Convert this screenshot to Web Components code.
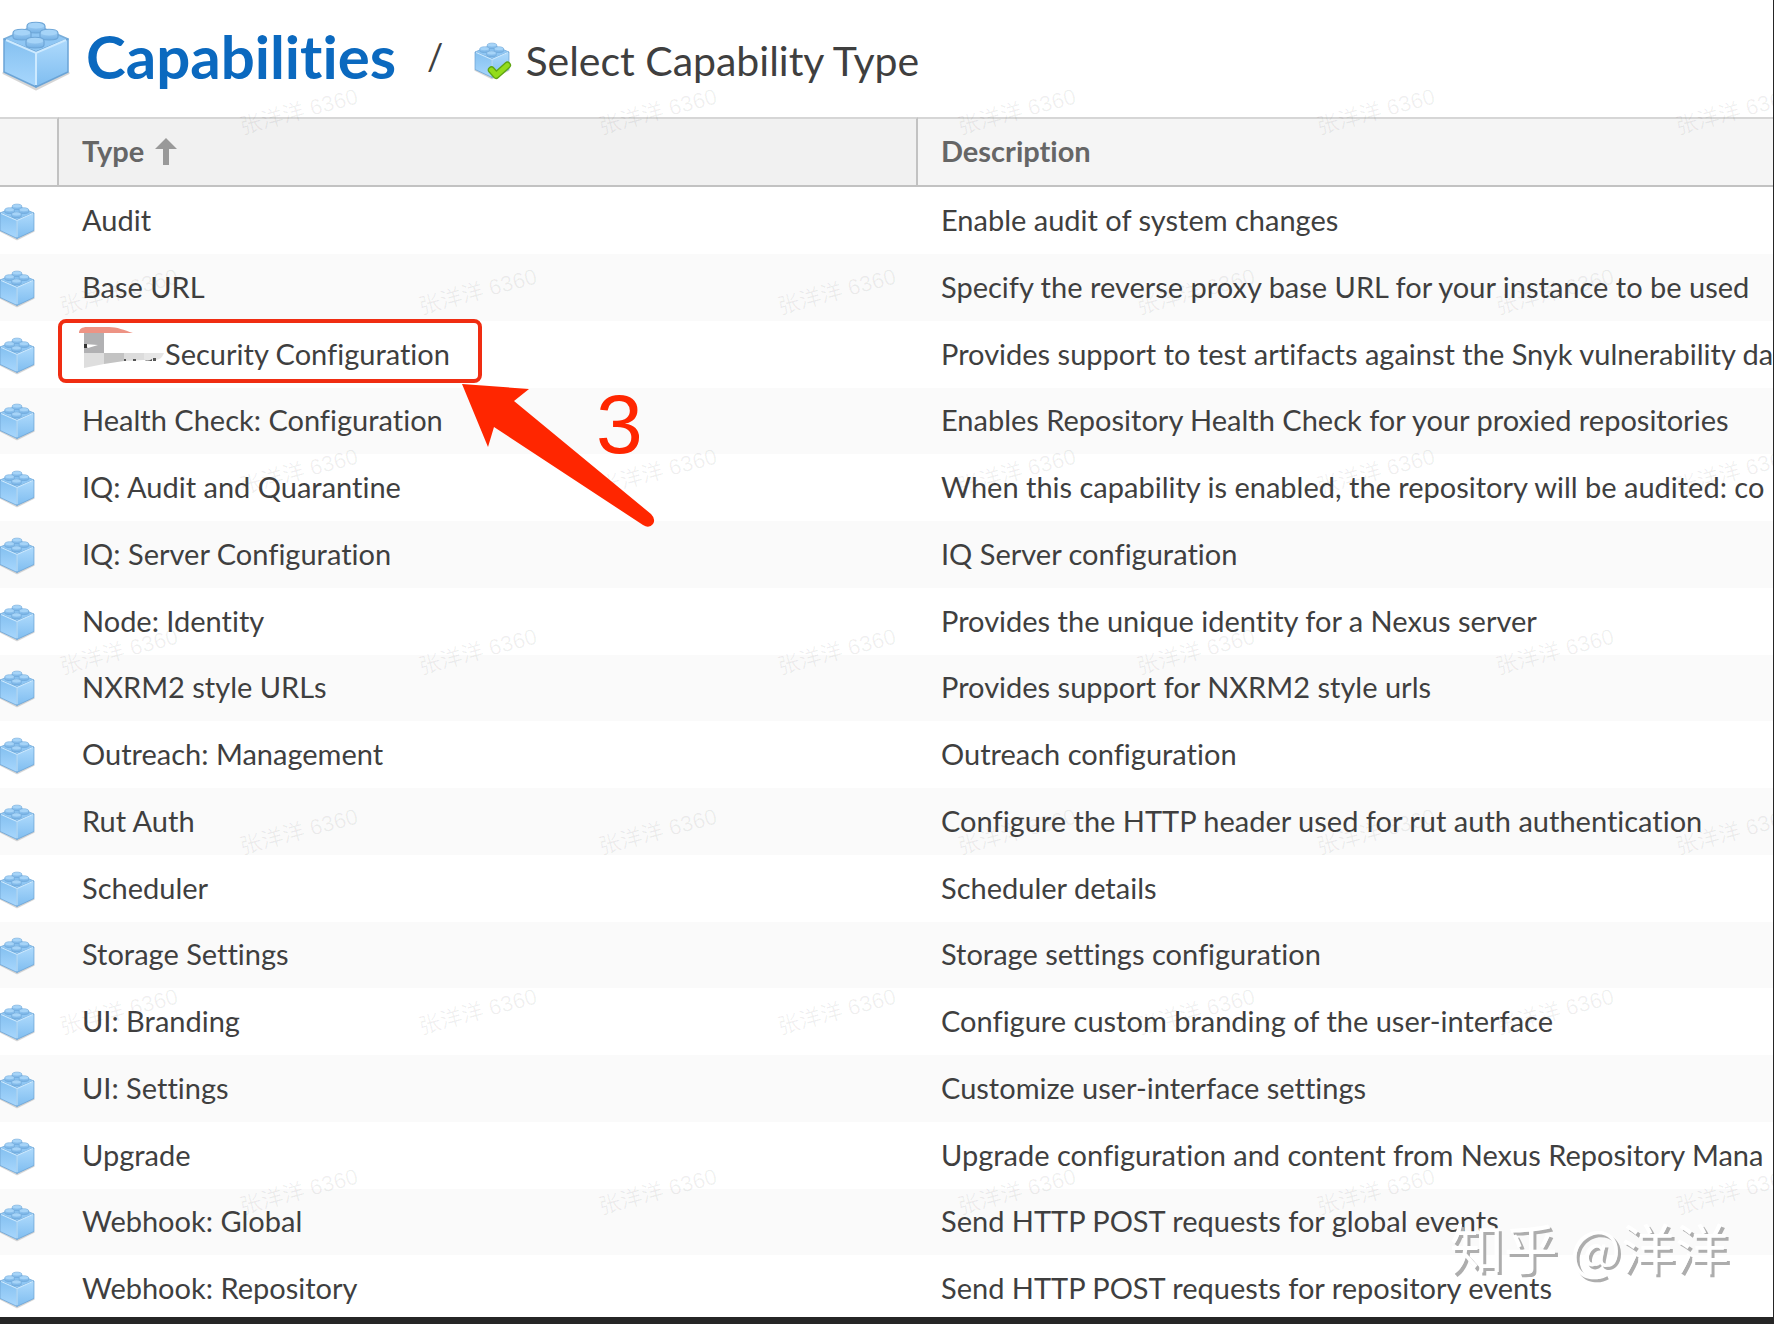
<!DOCTYPE html>
<html lang="en">
<head>
<meta charset="utf-8">
<title>Select Capability Type</title>
<style>
  body {
    margin: 0;
    background: #fff;
    color: #3f3f3f;
    font: 29px/32px Lato, "Noto Sans CJK SC", sans-serif;
    font-variant-ligatures: none;
  }
</style>
</head>
<body>
<capability-page>
  <page-header slot="header" heading="Capabilities">Select Capability Type</page-header>
  <capability-grid></capability-grid>
  <page-watermark slot="overlay" text="张洋洋 6360"></page-watermark>
  <step-callout slot="overlay">3</step-callout>
  <site-mark slot="overlay">知乎 @洋洋</site-mark>
</capability-page>

<script>
function makeTemplate(html) {
  const template = document.createElement("template");
  template.innerHTML = html;
  return template;
}

function attach(element, template) {
  const root = element.attachShadow({ mode: "open" });
  root.appendChild(template.content.cloneNode(true));
  return root;
}

const brickTemplate = makeTemplate(`
  <style>
    :host { display: inline-block; width: 36px; height: 36px; }
    svg { display: block; width: 100%; height: 100%; overflow: visible; }
    .check { display: none; }
    :host([checked]) .check { display: inline; }
  </style>
  <svg viewBox="0 0 68 68" aria-hidden="true">
    <defs>
      <linearGradient id="left" x1="0" y1="0" x2="0" y2="1">
        <stop offset="0" stop-color="#84c0f0"/><stop offset="1" stop-color="#a8d7fd"/>
      </linearGradient>
      <linearGradient id="right" x1="0" y1="0" x2="0" y2="1">
        <stop offset="0" stop-color="#aedafc"/><stop offset="1" stop-color="#7fbdf0"/>
      </linearGradient>
      <linearGradient id="stud" x1="0" y1="0" x2="0" y2="1">
        <stop offset="0" stop-color="#b0dafb"/><stop offset="1" stop-color="#74b0e4"/>
      </linearGradient>
    </defs>
    <path d="M2 51 34 67 66 51 34 62z" fill="#777" opacity=".3" stroke="#777" stroke-width="3" stroke-linejoin="round"/>
    <path d="M34 3 66 17 34 30 2 17z" fill="#8fc6f3" stroke="#79aeda" stroke-width="1.5" stroke-linejoin="round"/>
    <path d="M2 17 34 30V65L2 50z" fill="url(#left)" stroke="#6ba4d6" stroke-width="1.5" stroke-linejoin="round"/>
    <path d="M66 17 34 30V65L66 50z" fill="url(#right)" stroke="#6ba4d6" stroke-width="1.5" stroke-linejoin="round"/>
    <path d="M4 18 34 31 64 18M34 31V63" fill="none" stroke="#cdeaff" stroke-width="2"/>
    <g fill="url(#stud)" stroke="#6ea6d7" stroke-width="1.2">
      <path d="M25 4v4c0 4 18 4 18 0V4c0-5-18-5-18 0z"/>
      <path d="M11 11v4c0 4 18 4 18 0v-4c0-5-18-5-18 0z"/>
      <path d="M38 11v4c0 4 18 4 18 0v-4c0-5-18-5-18 0z"/>
      <path d="M24 19v4c0 4 18 4 18 0v-4c0-5-18-5-18 0z"/>
    </g>
    <g fill="#a6d4f8">
      <ellipse cx="34" cy="4" rx="8" ry="2.5"/><ellipse cx="20" cy="11" rx="8" ry="2.5"/>
      <ellipse cx="47" cy="11" rx="8" ry="2.5"/><ellipse cx="33" cy="19" rx="8" ry="2.5"/>
    </g>
    <g class="check" fill="none" stroke-linejoin="round" stroke-linecap="round">
      <path d="M33 51 42 61 63 42" stroke="#5fa512" stroke-width="14"/>
      <path d="M33 51 42 61 63 42" stroke="#93dc1c" stroke-width="9"/>
    </g>
  </svg>
`);
class BrickIcon extends HTMLElement {
  constructor() {
    super();
    attach(this, brickTemplate);
  }
}

const pageTemplate = makeTemplate(`
  <style>
    :host {
      display: flex;
      flex-direction: column;
      position: relative;
      box-sizing: border-box;
      height: 100vh;
      overflow: hidden;
      border-right: 1px solid #262626;
      border-bottom: 7px solid #262626;
    }
    main { flex: 1; min-height: 0; overflow: hidden; }
  </style>
  <slot name="header"></slot>
  <main><slot></slot></main>
  <slot name="overlay"></slot>
`);
class CapabilityPage extends HTMLElement {
  constructor() {
    super();
    attach(this, pageTemplate);
  }
}

const headerTemplate = makeTemplate(`
  <style>
    :host { display: block; flex: none; }
    nav { display: flex; align-items: center; box-sizing: border-box; height: 117px; padding: 0 0 5px 2px; }
    .large { width: 68px; height: 68px; margin-right: 16px; }
    a { color: #0b69bf; font-size: 60px; line-height: 68px; font-weight: 700; text-decoration: none; }
    .slash { margin: 0 31px; font-size: 36px; line-height: 40px; }
    h1 { display: flex; align-items: center; gap: 15px; margin: 10px 0 0; font-size: 41px; line-height: 44px; font-weight: 400; }
  </style>
  <nav aria-label="Breadcrumb">
    <brick-icon class="large"></brick-icon>
    <a href="#capabilities"></a>
    <span class="slash">/</span>
    <h1><brick-icon checked></brick-icon><slot></slot></h1>
  </nav>
`);
class PageHeader extends HTMLElement {
  constructor() {
    super();
    const root = attach(this, headerTemplate);
    root.querySelector("a").textContent = this.getAttribute("heading");
  }
}

// smudged-out vendor name in front of a capability type
const redactedTemplate = makeTemplate(`
  <style>
    :host { display: inline-block; width: 83px; height: 20px; vertical-align: middle; }
    svg { display: block; overflow: visible; }
  </style>
  <svg width="83" height="20" viewBox="82 348 83 20" aria-hidden="true">
    <path d="M79 334c0-4 3-6 8-6h22c8 0 15 3 24 6z" fill="#ed9384"/>
    <path d="M84 334h20v20H84z" fill="#b1b1b3"/>
    <path d="M84 345l14 1-10 3z" fill="#fff"/>
    <path d="M84 345h3v4h-3z" fill="#333"/>
    <path d="M84 354h20v11l-20 4z" fill="#dedede"/>
    <path d="M104 354h20v8l-20 3z" fill="#c3c3c3"/>
    <path d="M124 354h20v7l-20 1z" fill="#dcdcdc"/>
    <path d="M144 354h20c-2 5-5 7-9 7h-11z" fill="#e6e6e6"/>
    <path d="M124 360h2v2h-2zM133 360h3v2h-3zM144 360c2 2 5 2 8 0v2h-6zM153 359h3v3h-3z" fill="#555"/>
  </svg>
`);
class RedactedName extends HTMLElement {
  constructor() {
    super();
    attach(this, redactedTemplate);
  }
}

const capabilities = [
  { type: "Audit", description: "Enable audit of system changes" },
  { type: "Base URL", description: "Specify the reverse proxy base URL for your instance to be used" },
  { type: "Security Configuration", description: "Provides support to test artifacts against the Snyk vulnerability da", redacted: true },
  { type: "Health Check: Configuration", description: "Enables Repository Health Check for your proxied repositories" },
  { type: "IQ: Audit and Quarantine", description: "When this capability is enabled, the repository will be audited: co" },
  { type: "IQ: Server Configuration", description: "IQ Server configuration" },
  { type: "Node: Identity", description: "Provides the unique identity for a Nexus server" },
  { type: "NXRM2 style URLs", description: "Provides support for NXRM2 style urls" },
  { type: "Outreach: Management", description: "Outreach configuration" },
  { type: "Rut Auth", description: "Configure the HTTP header used for rut auth authentication" },
  { type: "Scheduler", description: "Scheduler details" },
  { type: "Storage Settings", description: "Storage settings configuration" },
  { type: "UI: Branding", description: "Configure custom branding of the user-interface" },
  { type: "UI: Settings", description: "Customize user-interface settings" },
  { type: "Upgrade", description: "Upgrade configuration and content from Nexus Repository Mana" },
  { type: "Webhook: Global", description: "Send HTTP POST requests for global events" },
  { type: "Webhook: Repository", description: "Send HTTP POST requests for repository events" },
];

const gridTemplate = makeTemplate(`
  <style>
    :host { display: block; }
    table { width: 100%; table-layout: fixed; border-collapse: separate; border-spacing: 0; }
    .icon { width: 59px; }
    .type { width: 859px; }
    th, td { box-sizing: border-box; height: 67px; padding: 0 0 2px 23px; text-align: left; white-space: nowrap; overflow: hidden; }
    th {
      height: 70px;
      background: #f5f5f5;
      border-top: 2px solid #d6d6d6;
      border-bottom: 2px solid #c2c2c2;
      border-right: 2px solid #c2c2c2;
      color: #666;
      font-weight: 700;
    }
    th:last-child { border-right: 0; }
    th.sorted { background: #f1f1f1; }
    tr:nth-child(4n) td { height: 66px; }
    tbody tr:nth-child(even) { background: #fafafa; }
    td:first-child { padding: 2px 0 0; }
    brick-icon { display: block; margin-left: -1px; }
    button { display: flex; align-items: center; gap: 11px; padding: 0; border: 0; background: none; color: inherit; font: inherit; }
  </style>
  <table>
    <colgroup><col class="icon"><col class="type"><col></colgroup>
    <thead>
      <tr>
        <th aria-label="Icon"></th>
        <th class="sorted" aria-sort="ascending">
          <button>Type
            <svg width="22" height="27" viewBox="0 0 22 27" aria-hidden="true"><path d="M11 0 22 11H14V27H8V11H0z" fill="#999"/></svg>
          </button>
        </th>
        <th>Description</th>
      </tr>
    </thead>
    <tbody></tbody>
  </table>
`);
class CapabilityGrid extends HTMLElement {
  constructor() {
    super();
    const root = attach(this, gridTemplate);
    const body = root.querySelector("tbody");
    capabilities.forEach((item) => {
      const row = body.insertRow();
      row.insertCell().appendChild(document.createElement("brick-icon"));
      const type = row.insertCell();
      if (item.redacted) type.appendChild(document.createElement("redacted-name"));
      type.append(item.type);
      row.insertCell().textContent = item.description;
    });
  }
}

const watermarkTemplate = makeTemplate(`
  <style>
    :host { position: absolute; inset: 0; overflow: hidden; pointer-events: none; }
    span {
      position: absolute;
      width: 122px;
      margin: -16px 0 0 -61px;
      color: rgba(0, 0, 0, 0.06);
      font: 22px/32px "Liberation Sans", "Noto Sans CJK SC", sans-serif;
      text-align: center;
      white-space: nowrap;
      transform: rotate(-15deg);
    }
  </style>
`);
class PageWatermark extends HTMLElement {
  constructor() {
    super();
    const root = attach(this, watermarkTemplate);
    for (let row = 0; row < 7; row++) {
      for (let col = 0; col < 5; col++) {
        const mark = document.createElement("span");
        mark.textContent = this.getAttribute("text");
        mark.style.left = (row % 2 ? 119 : 299) + col * 359 + "px";
        mark.style.top = 112 + row * 180 + "px";
        root.appendChild(mark);
      }
    }
  }
}

const calloutTemplate = makeTemplate(`
  <style>
    :host { position: absolute; left: 58px; top: 319px; color: #ff2600; pointer-events: none; }
    .frame { box-sizing: border-box; width: 424px; height: 64px; border: 4px solid #f02d12; border-radius: 8px; }
    svg { position: absolute; left: 402px; top: 64px; }
    .step { position: absolute; left: 538px; top: 57px; font: 84px/96px "Liberation Sans", sans-serif; }
  </style>
  <div class="frame"></div>
  <svg width="196" height="148" viewBox="460 383 196 148" aria-hidden="true">
    <path d="M462 384 529 389 514 401 651 514Q656 519 653 524 649 529 643 525L494 427 488 447z" fill="#ff2600"/>
  </svg>
  <div class="step"><slot></slot></div>
`);
class StepCallout extends HTMLElement {
  constructor() {
    super();
    attach(this, calloutTemplate);
  }
}

const siteMarkTemplate = makeTemplate(`
  <style>
    :host {
      position: absolute;
      right: 44px;
      bottom: 32px;
      color: #fff;
      font: 54px/76px "Noto Sans CJK SC", sans-serif;
      text-shadow: 3px 3px 0 #adadad;
      white-space: nowrap;
    }
  </style>
  <slot></slot>
`);
class SiteMark extends HTMLElement {
  constructor() {
    super();
    attach(this, siteMarkTemplate);
  }
}

customElements.define("brick-icon", BrickIcon);
customElements.define("redacted-name", RedactedName);
customElements.define("page-header", PageHeader);
customElements.define("capability-grid", CapabilityGrid);
customElements.define("page-watermark", PageWatermark);
customElements.define("step-callout", StepCallout);
customElements.define("site-mark", SiteMark);
customElements.define("capability-page", CapabilityPage);
</script>
</body>
</html>
